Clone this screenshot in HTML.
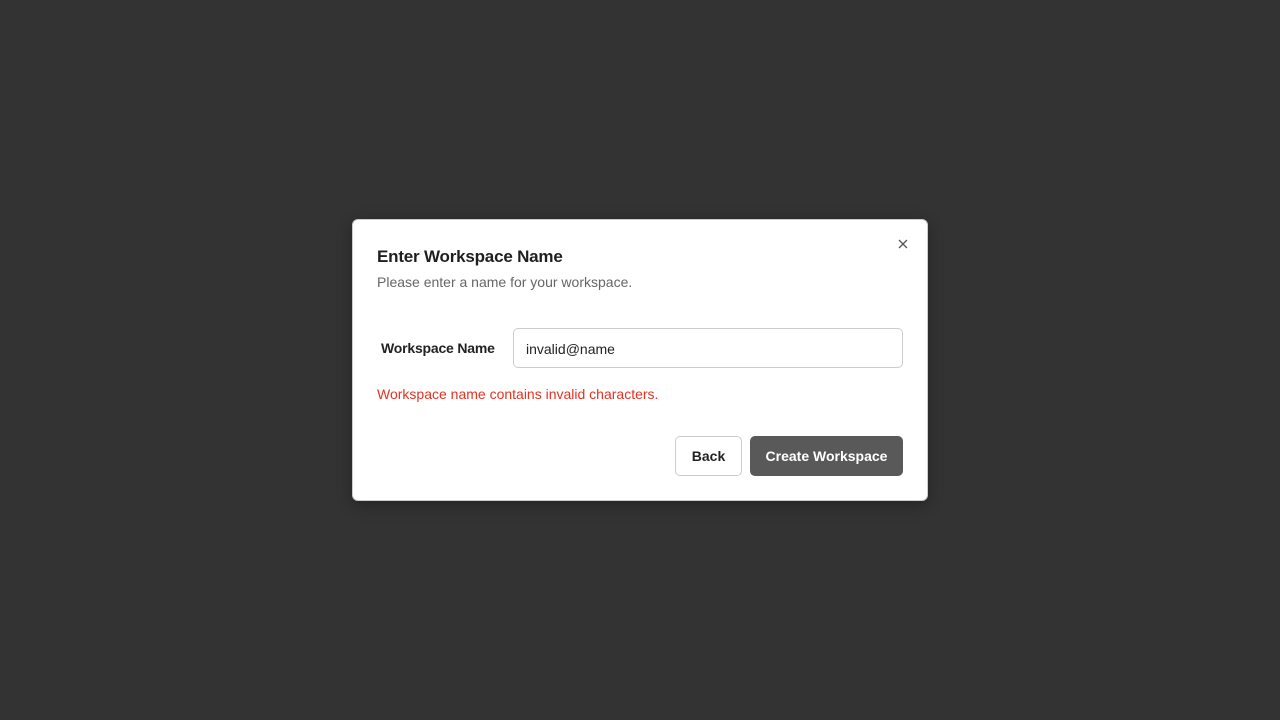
<!DOCTYPE html>
<html><head><style>
body{margin:0;width:1280px;height:720px;background:#333;font-family:"Liberation Sans",sans-serif;position:relative;overflow:hidden}
.m{position:absolute;left:352px;top:219px;width:574px;height:280px;background:#fff;border:1px solid #ccc;border-radius:6px;box-shadow:0 4px 16px rgba(0,0,0,.3)}
.t{position:absolute;left:24px;top:27px;font-size:17px;font-weight:bold;color:#1f1f1f;letter-spacing:-0.2px}
.s{position:absolute;left:24px;top:54px;font-size:14px;color:#666}
.x{position:absolute;left:544px;top:18px}
.l{position:absolute;left:28px;top:120px;font-size:14px;font-weight:bold;color:#222;letter-spacing:-0.2px}
.i{position:absolute;left:160px;top:108px;width:390px;height:40px;border:1px solid #ccc;border-radius:5px;box-sizing:border-box;font-size:14px;color:#222;padding:12px 0 0 12px}
.e{position:absolute;left:24px;top:166px;font-size:14px;color:#e53222}
.b{position:absolute;top:216px;height:40px;box-sizing:border-box;border-radius:5px;font-size:14px;font-weight:bold;display:flex;align-items:center;justify-content:center}
</style></head><body>
<div class="m">
<div class="t">Enter Workspace Name</div>
<div class="s">Please enter a name for your workspace.</div>
<svg class="x" width="12" height="12" viewBox="0 0 12 12"><path d="M2 2L10 10M10 2L2 10" stroke="#555" stroke-width="1.3"/></svg>
<div class="l">Workspace Name</div>
<div class="i">invalid@name</div>
<div class="e">Workspace name contains invalid characters.</div>
<div class="b" style="left:322px;width:67px;border:1px solid #ccc;color:#222">Back</div>
<div class="b" style="left:397px;width:153px;background:#595959;color:#fff">Create Workspace</div>
</div>
</body></html>
